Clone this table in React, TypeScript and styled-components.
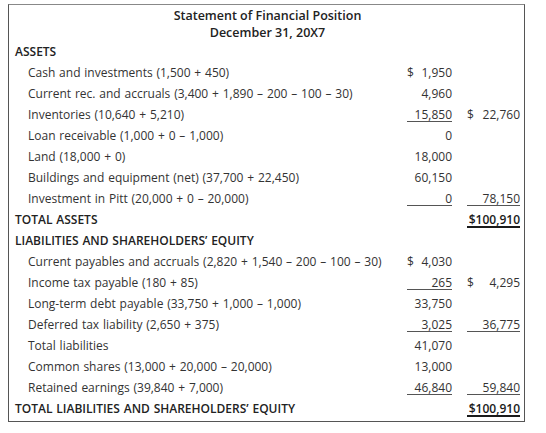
import React from 'react';
import styled, { createGlobalStyle } from 'styled-components';

const GlobalStyle = createGlobalStyle`
  body {
    margin: 0;
    padding: 4px 0 0 8px;
    background: #fff;
    font-family: 'Open Sans', 'Noto Sans', sans-serif;
  }
`;

const Statement = styled.div`
  width: 517px;
  height: 418px;
  box-sizing: border-box;
  border: 1px solid #555;
  border-top-color: #888;
  padding: 2px 4px 0 6px;
  color: #333;
  font-size: 12px;
`;

const Heading = styled.div`
  text-align: center;
  line-height: 17px;
  font-weight: 600;
  color: #222;
  font-size: 12.5px;
`;

const Row = styled.div<{ $indent?: boolean; $bold?: boolean }>`
  display: grid;
  grid-template-columns: 1fr 45px 53px;
  column-gap: 15px;
  height: 21px;
  line-height: 21px;
  padding-left: ${(p) => (p.$indent ? '13px' : '0')};
  font-weight: ${(p) => (p.$bold ? 600 : 400)};
  color: ${(p) => (p.$bold ? '#222' : '#333')};
`;

const Label = styled.div`
  white-space: nowrap;
  word-spacing: 0.7px;
`;

const Amount = styled.div<{ $rule?: 'single' | 'double' }>`
  display: flex;
  justify-content: space-between;
  height: 17px;
  white-space: pre;
  border-bottom: ${(p) =>
    p.$rule === 'single' ? '1px solid #555' : p.$rule === 'double' ? '2px solid #1a1a1a' : '1px solid transparent'};
  font-weight: ${(p) => (p.$rule === 'double' ? 600 : 'inherit')};
  color: ${(p) => (p.$rule === 'double' ? '#1a1a1a' : 'inherit')};
`;

type Cell = { v: string; cur?: boolean; rule?: 'single' | 'double' } | null;

function Money({ cell }: { cell: Cell }) {
  if (!cell) return <div />;
  return (
    <Amount $rule={cell.rule}>
      <span>{cell.cur ? '$' : ''}</span>
      <span>{cell.v}</span>
    </Amount>
  );
}

type Line = { label: string; indent?: boolean; bold?: boolean; a?: Cell; b?: Cell };

const lines: Line[] = [
  { label: 'ASSETS', bold: true },
  { label: 'Cash and investments (1,500 + 450)', indent: true, a: { v: '1,950', cur: true } },
  { label: 'Current rec. and accruals (3,400 + 1,890 \u2013 200 \u2013 100 \u2013 30)', indent: true, a: { v: '4,960' } },
  { label: 'Inventories (10,640 + 5,210)', indent: true, a: { v: '15,850', rule: 'single' }, b: { v: '22,760', cur: true } },
  { label: 'Loan receivable (1,000 + 0 \u2013 1,000)', indent: true, a: { v: '0' } },
  { label: 'Land (18,000 + 0)', indent: true, a: { v: '18,000' } },
  { label: 'Buildings and equipment (net) (37,700 + 22,450)', indent: true, a: { v: '60,150' } },
  { label: 'Investment in Pitt (20,000 + 0 \u2013 20,000)', indent: true, a: { v: '0', rule: 'single' }, b: { v: '78,150', rule: 'single' } },
  { label: 'TOTAL ASSETS', bold: true, b: { v: '$100,910', rule: 'double' } },
  { label: 'LIABILITIES AND SHAREHOLDERS\u2019 EQUITY', bold: true },
  { label: 'Current payables and accruals (2,820 + 1,540 \u2013 200 \u2013 100 \u2013 30)', indent: true, a: { v: '4,030', cur: true } },
  { label: 'Income tax payable (180 + 85)', indent: true, a: { v: '265', rule: 'single' }, b: { v: '4,295', cur: true } },
  { label: 'Long-term debt payable (33,750 + 1,000 \u2013 1,000)', indent: true, a: { v: '33,750' } },
  { label: 'Deferred tax liability (2,650 + 375)', indent: true, a: { v: '3,025', rule: 'single' }, b: { v: '36,775', rule: 'single' } },
  { label: 'Total liabilities', indent: true, a: { v: '41,070' } },
  { label: 'Common shares (13,000 + 20,000 \u2013 20,000)', indent: true, a: { v: '13,000' } },
  { label: 'Retained earnings (39,840 + 7,000)', indent: true, a: { v: '46,840', rule: 'single' }, b: { v: '59,840', rule: 'single' } },
  { label: 'TOTAL LIABILITIES AND SHAREHOLDERS\u2019 EQUITY', bold: true, b: { v: '$100,910', rule: 'double' } },
];

export default function App() {
  return (
    <>
      <GlobalStyle />
      <Statement>
        <Heading>Statement of Financial Position</Heading>
        <Heading>December 31, 20X7</Heading>
        {lines.map((l, i) => (
          <Row key={i} $indent={l.indent} $bold={l.bold}>
            <Label>{l.label}</Label>
            <Money cell={l.a ?? null} />
            <Money cell={l.b ?? null} />
          </Row>
        ))}
      </Statement>
    </>
  );
}
